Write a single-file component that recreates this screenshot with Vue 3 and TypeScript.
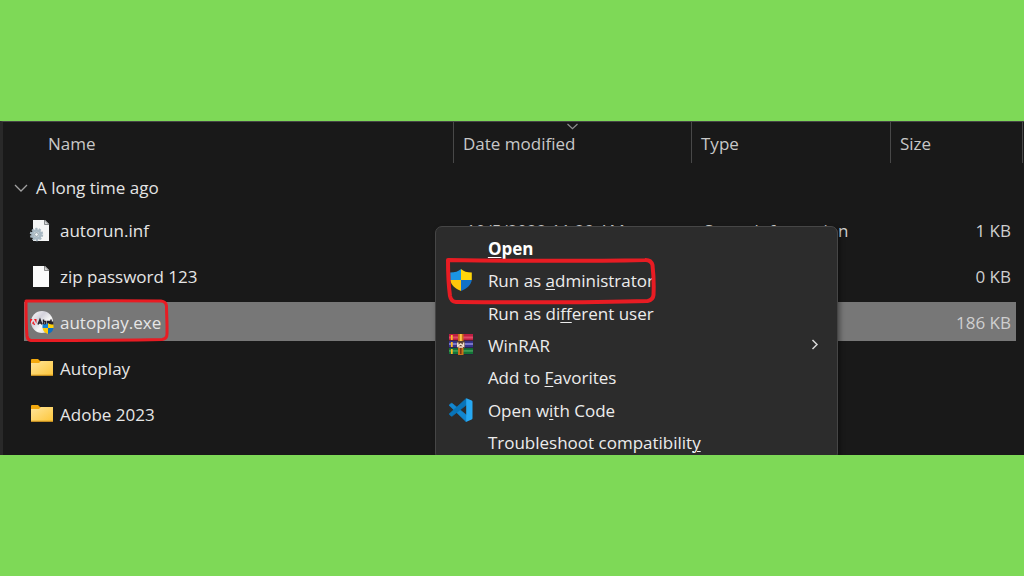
<script setup lang="ts">
import { ref } from 'vue'

type IconKind = 'inf' | 'file' | 'disc' | 'folder'

interface FileRow {
  name: string
  icon: IconKind
  modified: string
  type: string
  size: string
}

interface MenuEntry {
  before: string
  key: string
  after: string
  icon?: 'shield' | 'winrar' | 'code'
  strong?: boolean
  submenu?: boolean
  marked?: boolean
}

const files: FileRow[] = [
  { name: 'autorun.inf', icon: 'inf', modified: '10/5/2022 11:29 AM', type: 'Setup Information', size: '1 KB' },
  { name: 'zip password 123', icon: 'file', modified: '', type: '', size: '0 KB' },
  { name: 'autoplay.exe', icon: 'disc', modified: '', type: '', size: '186 KB' },
  { name: 'Autoplay', icon: 'folder', modified: '', type: '', size: '' },
  { name: 'Adobe 2023', icon: 'folder', modified: '', type: '', size: '' },
]

const menu: MenuEntry[] = [
  { before: '', key: 'O', after: 'pen', strong: true },
  { before: 'Run as ', key: 'a', after: 'dministrator', icon: 'shield', marked: true },
  { before: 'Run as di', key: 'f', after: 'ferent user' },
  { before: 'WinRAR', key: '', after: '', icon: 'winrar', submenu: true },
  { before: 'Add to ', key: 'F', after: 'avorites' },
  { before: 'Open w', key: 'i', after: 'th Code', icon: 'code' },
  { before: 'Troubleshoot compatibilit', key: 'y', after: '' },
]

const selected = ref('autoplay.exe')
const expanded = ref(true)
</script>

<template>
  <main class="page">
    <section class="explorer">
      <table class="files">
        <thead>
          <tr class="head">
            <th class="name" scope="col">Name</th>
            <th scope="col">
              Date modified
              <svg class="sort" width="13" height="7" viewBox="0 0 13 7" aria-hidden="true">
                <path d="M1.500 1 6.500 5.700 11.500 1" fill="none" stroke="#8d8d8d" stroke-width="1.300" />
              </svg>
            </th>
            <th scope="col">Type</th>
            <th scope="col">Size</th>
          </tr>
        </thead>
        <tbody>
          <tr class="group">
            <th scope="rowgroup">
              <button type="button" class="toggle" :aria-expanded="expanded" @click="expanded = !expanded">
                <svg width="14" height="9" viewBox="0 0 14 9" aria-hidden="true">
                  <path d="M1 1 7 7 13 1" fill="none" stroke="#a2a2a2" stroke-width="1.3" />
                </svg>
                A long time ago
              </button>
            </th>
          </tr>
          <template v-if="expanded">
            <tr
              v-for="file in files"
              :key="file.name"
              class="row"
              :class="{ selected: file.name === selected }"
              @click="selected = file.name"
            >
              <td class="file">
                <svg v-if="file.icon === 'inf'" class="icon" viewBox="0 0 24 24" aria-hidden="true">
                  <path d="M3 1h12l4 4v17H3z" fill="#f5f6f6" />
                  <path d="M14.500 1v4.500H19z" fill="#d2d5d7" stroke="#707476" stroke-width=".8" />
                  <circle cx="6.500" cy="15.500" r="5.600" fill="none" stroke="#a9b9c3" stroke-width="2.200" stroke-dasharray="2.200 1.300" />
                  <circle cx="6.500" cy="15.500" r="4" fill="#dce6eb" stroke="#a8b9c4" stroke-width="2.600" />
                  <circle cx="6.500" cy="15.500" r="1.900" fill="#eef3f5" stroke="#71838e" stroke-width=".7" />
                </svg>
                <svg v-else-if="file.icon === 'file'" class="icon" viewBox="0 0 24 24" aria-hidden="true">
                  <path d="M3 1h12l4 4v17H3z" fill="#fafafa" />
                  <path d="M14.500 1v4.500H19z" fill="#d6d6d6" stroke="#707070" stroke-width=".8" />
                </svg>
                <svg v-else-if="file.icon === 'disc'" class="icon" viewBox="0 0 24 24" aria-hidden="true">
                  <defs>
                    <linearGradient id="disc-shine" x1="0" y1="0" x2="1" y2="1">
                      <stop offset="0" stop-color="#ffffff" />
                      <stop offset=".35" stop-color="#d4d2dc" />
                      <stop offset=".6" stop-color="#f7f7f7" />
                      <stop offset="1" stop-color="#c8c8c8" />
                    </linearGradient>
                  </defs>
                  <circle cx="12" cy="11" r="11" fill="url(#disc-shine)" />
                  <path d="M0 14V8h2.500L0 12.500zM6.500 14V8H4l2.500 4.500zM3.200 10 5.200 14H3.800l-.6-1.200H2z" fill="#ee1c25" />
                  <path d="M8 13.500l2-5 2 5M9 12h2M13.500 8.500v5M13.500 10.500h2v3h-2M17.500 13.500v-3h2v3M17.500 12h2M21 8.500v5h1.500v-3" fill="none" stroke="#27222c" stroke-width="1.500" />
                  <path d="M18 12v5h-5.500v-3.500C15 13.500 17 13 18 12z" fill="#1482d6" />
                  <path d="M18 12v5h5.500v-3.500C21 13.500 19 13 18 12z" fill="#ffd20a" />
                  <path d="M12.500 17H18v6c-3-1-5.200-3-5.500-6z" fill="#ffc90a" />
                  <path d="M18 17h5.500c-.3 3-2.500 5-5.500 6z" fill="#0f70c4" />
                </svg>
                <svg v-else class="icon" viewBox="0 0 24 24" aria-hidden="true">
                  <defs>
                    <linearGradient id="folder-front" x1="0" y1="0" x2="1" y2="1">
                      <stop offset="0" stop-color="#ffe59a" />
                      <stop offset="1" stop-color="#fdc63a" />
                    </linearGradient>
                  </defs>
                  <path d="M1 3q0-1 1-1h6l2 2h13v4H1z" fill="#f3a90e" />
                  <path d="M1 6h8l2-2h12v14.500H1z" fill="url(#folder-front)" />
                  <path d="M1 18.200h22" stroke="#dc9c1c" stroke-width="1" />
                </svg>
                <span>{{ file.name }}</span>
                <svg v-if="file.icon === 'disc'" class="mark file-mark" viewBox="0 0 146 45" aria-hidden="true">
                  <path d="M2 3C45 3 95 2.500 137 3q5 .5 5.500 5c0 8 .8 18 .5 28q0 5-5 5.500C97 42.500 50 42.500 7 42.500q-3.500-.5-4-4.500C2 27 2 15 2 3z" />
                </svg>
              </td>
              <td>{{ file.modified }}</td>
              <td>{{ file.type }}</td>
              <td class="size">{{ file.size }}</td>
            </tr>
          </template>
        </tbody>
      </table>

      <div class="menu" role="menu">
        <button
          v-for="entry in menu"
          :key="entry.before + entry.key + entry.after"
          type="button"
          role="menuitem"
          class="entry"
          :class="{ strong: entry.strong }"
        >
          <span class="slot">
            <svg v-if="entry.icon === 'shield'" class="glyph" viewBox="0 0 24 24" aria-hidden="true">
              <path d="M12 0v11H1.200V3.500C6 3.500 9.500 2.500 12 0z" fill="#1b95e4" />
              <path d="M12 0v11h10.800V3.500C18 3.500 14.500 2.500 12 0z" fill="#ffd60a" />
              <path d="M1.200 11H12v11C6 19.500 2 16 1.200 11z" fill="#ffc60b" />
              <path d="M12 11h10.800C22 16 18 19.500 12 22z" fill="#1271c6" />
            </svg>
            <svg v-else-if="entry.icon === 'winrar'" class="glyph" viewBox="0 0 24 24" aria-hidden="true">
              <path d="M0 0h24v7H0z" fill="#bd1e42" />
              <path d="M0 2.500h24v2H0z" fill="#e04a66" />
              <path d="M0 7h24v7H0z" fill="#36348f" />
              <path d="M0 9h24v2H0z" fill="#7a75c8" />
              <path d="M0 14h24v6.500H0z" fill="#137437" />
              <path d="M0 16h24v1.800H0z" fill="#3c9a56" />
              <path d="M0 6.700h24M0 13.700h24M0 20.500h24" stroke="#252035" stroke-width=".9" />
              <path d="M2.800 1v5M2.800 8v5M2.800 15v5" stroke="#ffb925" stroke-width="1.800" />
              <path d="M9 0h5.500v21H9z" fill="#cc7018" />
              <path d="M10.800 0h2v7h-2z" fill="#ffc84b" />
              <path d="M7.800 7h8v6.500h-8z" fill="#594032" />
              <path d="M8.800 8.500V12l2.900-2 2.900 2V8.500M9.500 13h4.500" fill="none" stroke="#f3dfcc" stroke-width="1.500" />
              <path d="M11.800 14v6" stroke="#783015" stroke-width="1.500" />
            </svg>
            <svg v-else-if="entry.icon === 'code'" class="glyph" viewBox="0 0 24 24" aria-hidden="true">
              <path d="M0 6.200 2 4.500q.7-.4 1.300 0L18 16.500v5.800q-.9.300-1.600-.3z" fill="#1287d1" stroke="#1287d1" stroke-width=".6" />
              <path d="M0 15.100 2 17q.7.400 1.300 0L18 5.500V0q-.9-.3-1.600.3z" fill="#0874b9" stroke="#0874b9" stroke-width=".6" />
              <path d="M16.400 0q.6-.8 1.600-.5l4.700 2q.8.400.8 1.300v16.400q0 .9-.8 1.300l-4.700 2q-1 .3-1.600-.5.800.4.800-.6V.6q0-1-.8-.6z" fill="#27a8f2" />
            </svg>
          </span>
          <span class="label">{{ entry.before }}<u v-if="entry.key">{{ entry.key }}</u>{{ entry.after }}</span>
          <svg v-if="entry.submenu" class="arrow" width="8" height="14" viewBox="0 0 8 14" aria-hidden="true">
            <path d="M1.500 1 6 5.500 1.500 10" fill="none" stroke="#d8d8d8" stroke-width="1.500" />
          </svg>
          <svg v-if="entry.marked" class="mark menu-mark" viewBox="0 0 212 48" aria-hidden="true">
            <path d="M3 3C70 4 130 4.500 200 3q6-.3 7.500 5c1 9 1.500 19 1 30q-.5 5-6 6C137 46 75 45.500 11 45q-5-.5-6-6C3.500 28 3 15 3 3z" />
          </svg>
        </button>
      </div>
    </section>
  </main>
</template>

<style>
body {
  margin: 0;
}
</style>

<style scoped>
.page {
  display: flex;
  flex-direction: column;
  justify-content: center;
  min-height: 100vh;
  background: #7ed957;
  color: #e4e4e4;
  font: 17px/24px "Open Sans", "Noto Sans", sans-serif;
}

.explorer {
  position: relative;
  box-sizing: border-box;
  overflow: hidden;
  padding-bottom: 15px;
  border-top: 1px solid #454545;
  border-left: 3px solid #292929;
  background: #191919;
}

.files,
.files thead,
.files tbody {
  display: block;
}

tr {
  display: grid;
  grid-template-columns: 1fr 238px 199px 125px;
}

th,
td {
  padding: 0;
  font-weight: 400;
  text-align: left;
  white-space: nowrap;
}

.head {
  grid-template-columns: 1fr 238px 199px 132px;
  padding-right: 1px;
  color: #c8c8c8;
}

.head th {
  position: relative;
  padding: 10px 0 7px 9px;
  border-right: 1px solid #484848;
}

.head .name {
  padding-left: 45px;
}

.sort {
  position: absolute;
  top: 1px;
  left: 50%;
  margin-left: -7px;
}

.group {
  padding: 13px 0 10px 11px;
}

.toggle {
  display: flex;
  align-items: center;
  gap: 8px;
  padding: 0;
  border: 0;
  background: none;
  color: inherit;
  font: inherit;
}

.row {
  align-items: center;
  margin: 0 8px 7px 21px;
  line-height: 37px;
}

.row td {
  padding-top: 2px;
  padding-left: 12px;
  color: #cfcfcf;
}

.row .file {
  position: relative;
  display: flex;
  align-items: center;
  gap: 6px;
  padding-left: 6px;
  color: #e6e6e6;
}

.row .size {
  padding-right: 5px;
  text-align: right;
}

.selected {
  background: #777777;
}

.icon,
.glyph {
  display: block;
  overflow: visible;
  width: 24px;
  height: 24px;
}

.mark {
  position: absolute;
  fill: none;
  stroke: #e81c23;
  stroke-width: 3;
  stroke-linejoin: round;
}

.file-mark {
  top: -4px;
  left: 0;
  width: 146px;
  height: 45px;
}

.menu {
  position: absolute;
  top: 104px;
  bottom: -5px;
  left: 42.300%;
  box-sizing: border-box;
  display: grid;
  grid-auto-rows: 1fr;
  width: 39.500%;
  padding: 6px 0 0;
  border: 1px solid #464646;
  border-radius: 7px;
  background: #2c2c2c;
  box-shadow: 2px 2px 5px rgba(0, 0, 0, 0.4);
}

.entry {
  position: relative;
  display: flex;
  align-items: center;
  min-height: 0;
  padding: 0 18px 0 13px;
  border: 0;
  background: none;
  color: #ececec;
  font: inherit;
  text-align: left;
  white-space: nowrap;
}

.strong {
  color: #ffffff;
  font-weight: 700;
}

.slot {
  width: 39px;
}

.label {
  flex: 1;
}

u {
  text-decoration-thickness: 1px;
  text-underline-offset: 2px;
}

.menu-mark {
  top: -8px;
  left: 9px;
  width: 212px;
  height: 48px;
  stroke-width: 4;
}
</style>
